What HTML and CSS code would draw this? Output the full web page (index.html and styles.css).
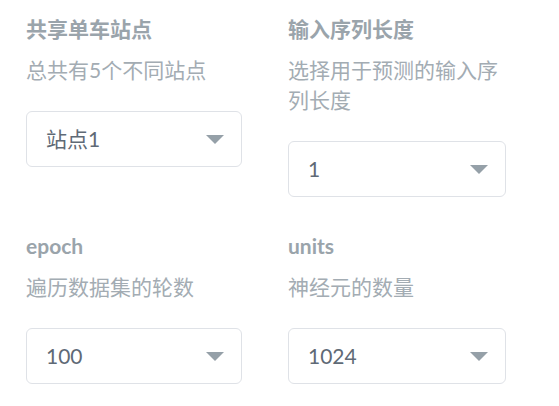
FILE: index.html
```html
<!DOCTYPE html>
<html lang="zh-CN">
<head>
<meta charset="utf-8">
<link rel="stylesheet" href="styles.css">
</head>
<body>
<div class="form">
  <div class="field">
    <div class="label">共享单车站点</div>
    <div class="desc">总共有5个不同站点</div>
    <div class="select"><span class="value">站点1</span><svg class="arrow" width="18" height="9" viewBox="0 0 18 9"><path d="M0 0H18L9 9Z"/></svg></div>
  </div>
  <div class="field">
    <div class="label">输入序列长度</div>
    <div class="desc">选择用于预测的输入序列长度</div>
    <div class="select"><span class="value">1</span><svg class="arrow" width="18" height="9" viewBox="0 0 18 9"><path d="M0 0H18L9 9Z"/></svg></div>
  </div>
  <div class="field">
    <div class="label">epoch</div>
    <div class="desc">遍历数据集的轮数</div>
    <div class="select"><span class="value">100</span><svg class="arrow" width="18" height="9" viewBox="0 0 18 9"><path d="M0 0H18L9 9Z"/></svg></div>
  </div>
  <div class="field">
    <div class="label">units</div>
    <div class="desc">神经元的数量</div>
    <div class="select"><span class="value">1024</span><svg class="arrow" width="18" height="9" viewBox="0 0 18 9"><path d="M0 0H18L9 9Z"/></svg></div>
  </div>
</div>
</body>
</html>
```
FILE: styles.css
```css
html, body {
  margin: 0;
  padding: 0;
  background: #ffffff;
}
body {
  font-family: Lato, "Noto Sans CJK SC", sans-serif;
  font-size: 21px;
  line-height: 30px;
}
.form {
  display: grid;
  grid-template-columns: 216px 218px;
  column-gap: 46px;
  padding: 14px 26px 0 26px;
}
.field {
  display: flex;
  flex-direction: column;
  padding-bottom: 34px;
}
.label {
  font-weight: 700;
  color: #9aa4ab;
}
.desc {
  margin-top: 11px;
  color: #a3acb3;
}
.select {
  margin-top: 26px;
  height: 56px;
  box-sizing: border-box;
  border: 1px solid #dfe2e7;
  border-radius: 6px;
  display: flex;
  align-items: center;
  justify-content: space-between;
  padding: 0 17px 0 19px;
  color: #5f6a76;
}
.arrow {
  fill: #95a0a8;
  display: block;
}
```
